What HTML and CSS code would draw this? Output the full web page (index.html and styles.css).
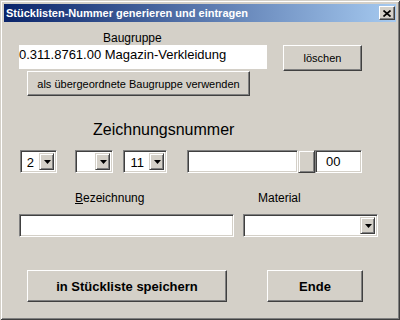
FILE: index.html
```html
<!DOCTYPE html>
<html>
<head>
<meta charset="utf-8">
<link rel="stylesheet" href="styles.css">
</head>
<body>
<div class="window">
  <div class="titlebar">
    <span class="title">Stücklisten-Nummer generieren und eintragen</span>
    <div class="close">
      <svg width="8" height="7" viewBox="0 0 8 7"><path d="M0.5 0.5 L7.5 6.5 M7.5 0.5 L0.5 6.5" stroke="#000" stroke-width="1.7" fill="none"/></svg>
    </div>
  </div>
  <div class="content">
    <div class="row-top">
      <div class="col-bg">
        <div class="label lbl-bg">Baugruppe</div>
        <div class="flat-field">0.311.8761.00 Magazin-Verkleidung</div>
        <div class="btn btn-parent">als übergeordnete Baugruppe verwenden</div>
      </div>
      <div class="btn btn-del">löschen</div>
    </div>
    <div class="heading">Zeichnungsnummer</div>
    <div class="row-nums">
      <div class="combo c1"><span class="val">2</span><div class="drop"><svg width="7" height="4" viewBox="0 0 7 4"><polygon points="0,0 7,0 3.5,4" fill="#000"/></svg></div></div>
      <div class="combo c2"><span class="val"></span><div class="drop"><svg width="7" height="4" viewBox="0 0 7 4"><polygon points="0,0 7,0 3.5,4" fill="#000"/></svg></div></div>
      <div class="combo c3"><span class="val">11</span><div class="drop"><svg width="7" height="4" viewBox="0 0 7 4"><polygon points="0,0 7,0 3.5,4" fill="#000"/></svg></div></div>
      <div class="field f4"></div>
      <div class="spin"></div>
      <div class="field f5">00</div>
    </div>
    <div class="row-labels">
      <span class="label lbl-bez"><u>B</u>ezeichnung</span>
      <span class="label lbl-mat">Material</span>
    </div>
    <div class="row-fields">
      <div class="field f-bez"></div>
      <div class="combo c-mat"><span class="val"></span><div class="drop"><svg width="7" height="4" viewBox="0 0 7 4"><polygon points="0,0 7,0 3.5,4" fill="#000"/></svg></div></div>
    </div>
    <div class="row-buttons">
      <div class="btn btn-save">in Stückliste speichern</div>
      <div class="btn btn-end">Ende</div>
    </div>
  </div>
</div>
</body>
</html>
```
FILE: styles.css
```css
html, body {
  margin: 0;
  padding: 0;
  background: #D4D0C8;
}
.window {
  width: 400px;
  height: 320px;
  box-sizing: border-box;
  padding: 4px;
  background: #D4D0C8;
  box-shadow: inset 1px 1px #D4D0C8, inset -1px -1px #404040, inset 2px 2px #FFFFFF, inset -2px -2px #808080;
  font-family: "Liberation Sans", Arial, sans-serif;
  color: #000;
}
.titlebar {
  height: 18px;
  display: flex;
  align-items: center;
  justify-content: space-between;
  background: linear-gradient(to right, #0A246A, #A6CAF0);
}
.title {
  color: #fff;
  font-weight: bold;
  font-size: 11px;
  padding-left: 2px;
  line-height: 18px;
}
.close {
  width: 16px;
  height: 14px;
  margin-right: 1px;
  box-sizing: border-box;
  background: #D4D0C8;
  border: 1px solid;
  border-color: #FFFFFF #404040 #404040 #FFFFFF;
  box-shadow: inset -1px -1px #808080;
  display: flex;
  align-items: center;
  justify-content: center;
}
.close svg { display: block; margin-left: 0; }
.label {
  font-size: 12px;
  line-height: 14px;
}
.row-top {
  display: flex;
  margin-top: 10px;
  padding-left: 15px;
}
.col-bg {
  width: 248px;
  display: flex;
  flex-direction: column;
}
.lbl-bg {
  margin-left: 84px;
  height: 13px;
  line-height: 13px;
}
.flat-field {
  height: 24px;
  box-sizing: border-box;
  background: #fff;
  font-size: 13px;
  line-height: 16px;
  padding-top: 2px;
  white-space: nowrap;
}
.btn {
  box-sizing: border-box;
  background: #D4D0C8;
  border: 1px solid;
  border-color: #FFFFFF #404040 #404040 #FFFFFF;
  box-shadow: inset -1px -1px #808080;
  display: flex;
  align-items: center;
  justify-content: center;
  font-size: 11px;
  white-space: nowrap;
}
.btn-parent {
  margin-top: 2px;
  margin-left: 8px;
  width: 223px;
  height: 25px;
}
.btn-del {
  margin-left: 16px;
  margin-top: 13px;
  width: 79px;
  height: 26px;
}
.heading {
  margin-top: 24px;
  margin-left: 89px;
  font-size: 16px;
  line-height: 19px;
}
.field, .combo {
  box-sizing: border-box;
  background: #fff;
  border: 1px solid;
  border-color: #808080 #FFFFFF #FFFFFF #808080;
  box-shadow: inset 1px 1px #404040, inset -1px -1px #D4D0C8;
  height: 23px;
}
.combo {
  display: flex;
  align-items: stretch;
  padding: 2px;
}
.combo .val {
  flex: 1;
  text-align: right;
  padding-right: 5px;
  font-size: 13px;
  line-height: 19px;
}
.drop {
  width: 15px;
  box-sizing: border-box;
  background: #D4D0C8;
  border: 1px solid;
  border-color: #D4D0C8 #404040 #404040 #D4D0C8;
  box-shadow: inset 1px 1px #FFFFFF, inset -1px -1px #808080;
  display: flex;
  align-items: center;
  justify-content: center;
}
.drop svg { display: block; margin-left: 1px; margin-top: 1px; }
.row-nums {
  display: flex;
  margin-top: 11px;
  margin-left: 16px;
}
.c1 { width: 37px; }
.c2 { width: 38px; margin-left: 18px; }
.c3 { width: 44px; margin-left: 10px; }
.f4 { width: 111px; margin-left: 20px; }
.spin {
  width: 17px;
  height: 23px;
  box-sizing: border-box;
  background: #D4D0C8;
  border: 1px solid;
  border-color: #D4D0C8 #404040 #404040 #D4D0C8;
  box-shadow: inset 1px 1px #FFFFFF, inset -1px -1px #808080;
}
.f5 {
  width: 47px;
  font-size: 13px;
  line-height: 21px;
  padding-left: 10px;
}
.row-labels {
  display: flex;
  margin-top: 18px;
  margin-left: 71px;
}
.lbl-bez { width: 183px; }
.row-fields {
  display: flex;
  margin-top: 9px;
  margin-left: 15px;
}
.f-bez { width: 215px; }
.c-mat { width: 135px; margin-left: 9px; }
.row-buttons {
  display: flex;
  margin-top: 33px;
  margin-left: 23px;
}
.btn-save, .btn-end {
  height: 32px;
  font-size: 13px;
  font-weight: bold;
}
.btn-save { width: 200px; }
.btn-end { width: 96px; margin-left: 40px; }
```
